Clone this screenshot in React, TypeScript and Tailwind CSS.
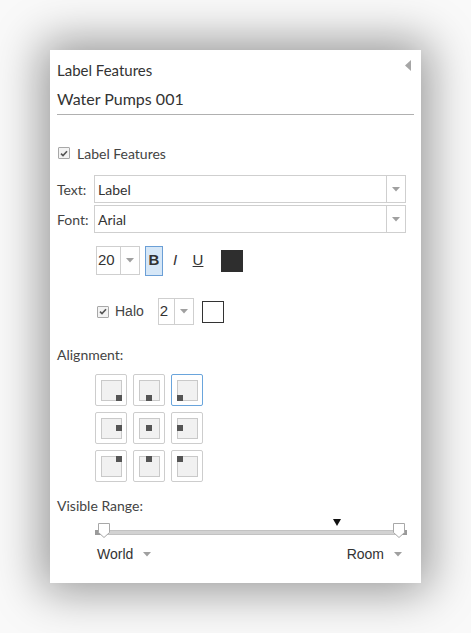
import React from "react";

const AV = { fontFamily: "Lato, 'Noto Sans', sans-serif" };
const AR = { fontFamily: "'Liberation Sans', Arial, sans-serif" };

function Caret({ className = "" }: { className?: string }) {
  return (
    <svg width="8" height="5" viewBox="0 0 8 5" className={className}>
      <path d="M0 0H8L4 4.5Z" fill="#a0a0a0" />
    </svg>
  );
}

function Check() {
  return (
    <div className="w-[12px] h-[12px] border border-[#a8a8a8] bg-[#f3f3f3] rounded-[1px] flex items-center justify-center">
      <svg width="8" height="7" viewBox="0 0 8 7">
        <path d="M1 3.6 L3 5.6 L7 1.2" fill="none" stroke="#555" strokeWidth="1.6" />
      </svg>
    </div>
  );
}

function Select({ label, value }: { label: string; value: string }) {
  return (
    <div className="flex items-center h-[28px]">
      <div className="w-[37px] text-[14px] text-[#444]" style={AV}>{label}</div>
      <div className="w-[312px] h-[28px] border border-[#cfcfcf] flex bg-white">
        <div className="flex-1 pl-[3px] flex items-center text-[14px] text-[#333]" style={AV}>{value}</div>
        <div className="w-[19px] border-l border-[#cfcfcf] flex items-center justify-center">
          <Caret />
        </div>
      </div>
    </div>
  );
}

const dots = [
  "bottom-[-1px] right-[-1px]",
  "bottom-[-1px] left-[6.5px]",
  "bottom-[-1px] left-[-1px]",
  "top-[6.5px] right-[-1px]",
  "top-[6.5px] left-[6.5px]",
  "top-[6.5px] left-[-1px]",
  "top-[-1px] right-[-1px]",
  "top-[-1px] left-[6.5px]",
  "top-[-1px] left-[-1px]",
];

export default function App() {
  return (
    <div className="w-[471px] min-h-[633px] bg-[#f9f9f9] pt-[50px] pl-[50px]">
      <div className="w-[371px] h-[533px] bg-white shadow-[0_0_44px_8px_rgba(0,0,0,0.4)] px-[7px] text-[#333]">
        <div className="flex justify-between items-center pt-[10px] h-[30px]">
          <div className="text-[15px] leading-[20px] text-[#333]" style={AV}>Label Features</div>
          <svg width="6" height="11" viewBox="0 0 6 11" className="mr-[3px] mb-[9px]">
            <path d="M6 0V11L0 5.5Z" fill="#a6a6a6" />
          </svg>
        </div>
        <div className="mt-[8px] pb-[4px] border-b border-[#b0b0b0] text-[16px] leading-[22px] text-[#333]" style={AV}>
          Water Pumps 001
        </div>

        <div className="mt-[28px] h-[20px] flex items-center gap-[7px] pl-[1px]">
          <Check />
          <span className="text-[14px] text-[#444]" style={AV}>Label Features</span>
        </div>

        <div className="mt-[12px]">
          <Select label="Text:" value="Label" />
        </div>
        <div className="mt-[2px]">
          <Select label="Font:" value="Arial" />
        </div>

        <div className="mt-[13px] ml-[39px] flex items-center h-[29px]">
          <div className="w-[44px] h-[29px] border border-[#cfcfcf] flex">
            <div className="w-[23px] flex items-center pl-[1px] text-[15px] text-[#333]" style={AR}>20</div>
            <div className="flex-1 border-l border-[#cfcfcf] flex items-center justify-center">
              <Caret />
            </div>
          </div>
          <div className="ml-[5px] w-[18px] h-[30px] bg-[#d6e7f7] border border-[#6b9fd6] flex items-center justify-center text-[15px] font-bold text-[#333]" style={AR}>
            B
          </div>
          <div className="w-[24px] text-center text-[15px] italic text-[#333]" style={AR}>I</div>
          <div className="w-[22px] text-center text-[15px] underline text-[#333]" style={AR}>U</div>
          <div className="ml-[12px] w-[22px] h-[22px] bg-[#2e2e2e]" />
        </div>

        <div className="mt-[23px] ml-[40px] flex items-center h-[27px]">
          <Check />
          <span className="ml-[6px] text-[14px] text-[#444]" style={AR}>Halo</span>
          <div className="ml-[14px] w-[36px] h-[27px] border border-[#cfcfcf] flex">
            <div className="w-[15px] flex items-center pl-[1px] text-[15px] text-[#333]" style={AR}>2</div>
            <div className="flex-1 border-l border-[#cfcfcf] flex items-center justify-center">
              <Caret />
            </div>
          </div>
          <div className="ml-[8px] w-[22px] h-[22px] border border-[#333] bg-white" />
        </div>

        <div className="mt-[19px] h-[20px] flex items-center text-[14px] text-[#444]" style={AV}>Alignment:</div>

        <div className="mt-[10px] ml-[38px] grid grid-cols-[32px_32px_32px] gap-[6px] w-max">
          {dots.map((d, i) => (
            <div
              key={i}
              className={
                i === 2
                  ? "w-[32px] h-[32px] rounded-[2px] border-[1.5px] border-[#6aa5dc] bg-white flex items-center justify-center"
                  : "w-[32px] h-[32px] rounded-[2px] border border-[#cdcdcd] bg-white flex items-center justify-center"
              }
            >
              <div className="relative w-[21px] h-[21px] bg-[#f1f1f1] border border-[#c9c9c9]">
                <div className={"absolute w-[6px] h-[6px] bg-[#555] " + d} />
              </div>
            </div>
          ))}
        </div>

        <div className="mt-[13px] h-[20px] flex items-center text-[14px] text-[#444]" style={AV}>Visible Range:</div>

        <div className="mt-[7px] ml-[38px] w-[312px] h-[17px] relative">
          <div className="absolute left-0 right-0 top-[8px] h-[5px] bg-[#d2d2d2] border-y border-[#c2c2c2]" />
          <div className="absolute left-0 top-[8px] w-[6px] h-[5px] bg-[#9a9a9a]" />
          <div className="absolute right-0 top-[8px] w-[6px] h-[5px] bg-[#9a9a9a]" />
          <svg width="12" height="15" viewBox="0 0 12 15" className="absolute left-[3px] top-[1px]">
            <path d="M0.5 0.5H11.5V9.5L6 14.5L0.5 9.5Z" fill="#fff" stroke="#a8a8a8" />
          </svg>
          <svg width="12" height="15" viewBox="0 0 12 15" className="absolute left-[298px] top-[1px]">
            <path d="M0.5 0.5H11.5V9.5L6 14.5L0.5 9.5Z" fill="#fff" stroke="#a8a8a8" />
          </svg>
          <svg width="8" height="7" viewBox="0 0 8 7" className="absolute left-[238px] top-[-3px]">
            <path d="M0 0H8L4 7Z" fill="#111" />
          </svg>
        </div>

        <div className="mt-[5px] ml-[40px] w-[305px] flex justify-between h-[20px] items-center text-[14px] text-[#333]" style={AR}>
          <div className="flex items-center gap-[10px]">
            <span>World</span>
            <Caret />
          </div>
          <div className="flex items-center gap-[10px]">
            <span>Room</span>
            <Caret />
          </div>
        </div>
      </div>
    </div>
  );
}
